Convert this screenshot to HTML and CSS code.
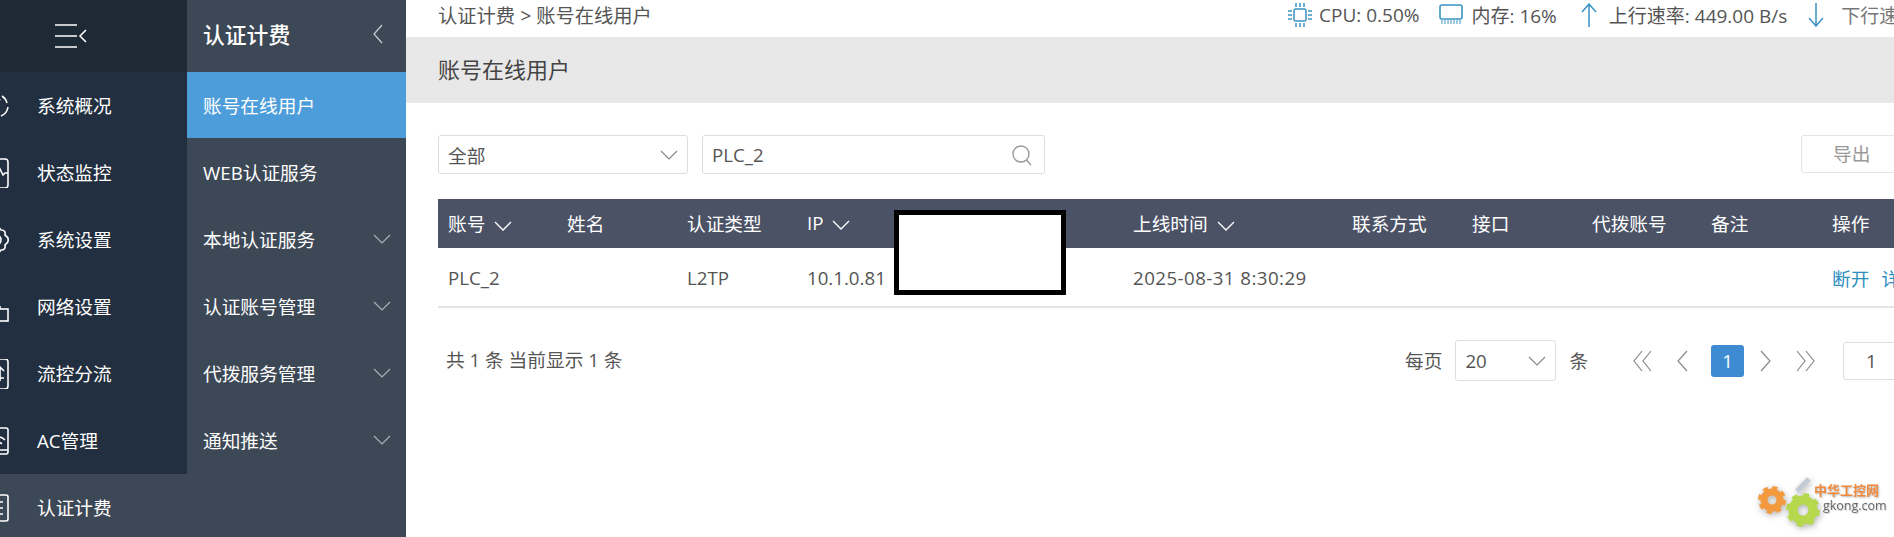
FILE: index.html
```html
<!DOCTYPE html>
<html>
<head>
    <meta charset="utf-8">
    <title>账号在线用户</title>
    <link rel="stylesheet" href="styles.css">
</head>
<body>
    <div class="app">
        <div class="nav-main">
            <div class="nav-toggle">
                <svg width="32" height="28" viewBox="0 0 32 28" fill="none" stroke="#fff" stroke-width="1.5">
                    <path d="M0 3H22M0 14H22M0 25H22"/>
                    <path d="M31 8L25 14L31 20"/>
                </svg>
            </div>
            <ul class="nav-list">
                <li class="nav-item">
                    <svg class="nav-icon" viewBox="0 0 30 30" fill="none" stroke="#fff" stroke-width="1.6"><path d="M23 5A11.5 11.5 0 0 1 28 12M29 16A11.5 11.5 0 0 1 22 25M14 4A11.5 11.5 0 0 1 19 4"/><path d="M17 15L21 8"/></svg>
                    系统概况
                </li>
                <li class="nav-item">
                    <svg class="nav-icon" viewBox="0 0 30 30" fill="none" stroke="#fff" stroke-width="1.6"><rect x="5" y="1" width="24" height="29" rx="3"/><path d="M6 17H16L20 9L24 17L26 15H29"/></svg>
                    状态监控
                </li>
                <li class="nav-item">
                    <svg class="nav-icon" viewBox="0 0 30 30" fill="none" stroke="#fff" stroke-width="1.6"><path d="M14 3Q20 1 22 5Q27 5 26 10Q30 13 29 15Q30 17 26 20Q27 25 22 25Q20 29 14 27"/><circle cx="16" cy="15" r="6"/></svg>
                    系统设置
                </li>
                <li class="nav-item">
                    <svg class="nav-icon" viewBox="0 0 30 30" fill="none" stroke="#fff" stroke-width="1.6"><rect x="15" y="17" width="14" height="12"/><path d="M21 14V17"/></svg>
                    网络设置
                </li>
                <li class="nav-item">
                    <svg class="nav-icon" viewBox="0 0 30 30" fill="none" stroke="#fff" stroke-width="1.6"><rect x="5" y="0" width="24" height="30" rx="3"/><path d="M21 8V22M16 12L21 8L25 12M14 19H25"/></svg>
                    流控分流
                </li>
                <li class="nav-item">
                    <svg class="nav-icon" viewBox="0 0 30 30" fill="none" stroke="#fff" stroke-width="1.6"><rect x="4" y="2" width="25" height="26" rx="2"/><path d="M4 24H29M14 14Q20 8 26 14M18 18Q20 15 23 18"/></svg>
                    AC管理
                </li>
                <li class="nav-item">
                    <svg class="nav-icon" viewBox="0 0 30 30" fill="none" stroke="#fff" stroke-width="1.6"><rect x="4" y="2" width="25" height="26" rx="2"/><path d="M10 9H24M10 15H24M10 21H24"/></svg>
                    认证计费
                </li>
            </ul>
        </div>

        <div class="nav-sub">
            <div class="nav-sub-title">
                认证计费
                <svg width="12" height="22" viewBox="0 0 12 22" fill="none" stroke="#c9ced4" stroke-width="1.2"><path d="M10 2L2 11L10 20"/></svg>
            </div>
            <div class="sub-item active">账号在线用户</div>
            <div class="sub-item">WEB认证服务</div>
            <div class="sub-item">本地认证服务 <svg class="chev" viewBox="0 0 18 10"><path d="M1 1L9 9L17 1"/></svg></div>
            <div class="sub-item">认证账号管理 <svg class="chev" viewBox="0 0 18 10"><path d="M1 1L9 9L17 1"/></svg></div>
            <div class="sub-item">代拨服务管理 <svg class="chev" viewBox="0 0 18 10"><path d="M1 1L9 9L17 1"/></svg></div>
            <div class="sub-item">通知推送 <svg class="chev" viewBox="0 0 18 10"><path d="M1 1L9 9L17 1"/></svg></div>
        </div>

        <div class="main">
            <div class="topbar">
                <div class="crumb">认证计费 &gt; 账号在线用户</div>
                <div class="stats">
                    <span class="stat stat-cpu">
                        <svg width="26" height="28" viewBox="0 0 26 28" fill="none" stroke="#3b93c3" stroke-width="1.5"><rect x="7" y="8" width="12" height="12" rx="2"/><path d="M9 2V6M13 2V6M17 2V6M9 22V26M13 22V26M17 22V26M1 10H5M1 14H5M1 18H5M21 10H25M21 14H25M21 18H25"/></svg>
                        CPU: 0.50%
                    </span>
                    <span class="stat stat-mem">
                        <svg width="24" height="22" viewBox="0 0 24 22" fill="none" stroke="#3b93c3" stroke-width="1.6"><rect x="1" y="1" width="22" height="14" rx="2"/><path d="M3 16V20M6 16V20M9 16V20M12 16V20M15 16V20M18 16V20M21 16V20" stroke-width="1"/></svg>
                        内存: 16%
                    </span>
                    <span class="stat stat-up">
                        <svg width="16" height="24" viewBox="0 0 16 24" fill="none" stroke="#3b93c3" stroke-width="1.5"><path d="M8 24V1M1 9L8 1L15 9"/></svg>
                        上行速率: 449.00 B/s
                    </span>
                    <span class="stat stat-down">
                        <svg width="16" height="24" viewBox="0 0 16 24" fill="none" stroke="#3b93c3" stroke-width="1.5"><path d="M8 0V23M1 15L8 23L15 15"/></svg>
                        下行速率
                    </span>
                </div>
            </div>

            <h1 class="page-title">账号在线用户</h1>

            <div class="toolbar">
                <div class="field field-select">
                    全部
                    <svg class="field-chev" viewBox="0 0 18 10"><path d="M1 1L9 9L17 1"/></svg>
                </div>
                <div class="field field-search">
                    PLC_2
                    <svg width="22" height="22" viewBox="0 0 22 22" fill="none" stroke="#9a9a9a" stroke-width="1.4"><circle cx="10" cy="10" r="8"/><path d="M15.5 16L20 21"/></svg>
                </div>
                <div class="btn-export">导出</div>
            </div>

            <div class="table">
                <div class="table-row table-head">
                    <div class="col-a">账号 <svg class="sort" viewBox="0 0 18 10"><path d="M1 1L9 9L17 1"/></svg></div>
                    <div class="col-b">姓名</div>
                    <div class="col-b">认证类型</div>
                    <div class="col-ip">IP <svg class="sort" viewBox="0 0 18 10"><path d="M1 1L9 9L17 1"/></svg></div>
                    <div class="col-time">上线时间 <svg class="sort" viewBox="0 0 18 10"><path d="M1 1L9 9L17 1"/></svg></div>
                    <div>联系方式</div>
                    <div>接口</div>
                    <div>代拨账号</div>
                    <div>备注</div>
                    <div>操作</div>
                </div>
                <div class="table-row table-body">
                    <div class="col-a">PLC_2</div>
                    <div class="col-b"></div>
                    <div class="col-b">L2TP</div>
                    <div class="col-ip">10.1.0.81</div>
                    <div class="col-time cell-time">2025-08-31 8:30:29</div>
                    <div></div>
                    <div></div>
                    <div></div>
                    <div></div>
                    <div class="actions"><a>断开</a><a>详情</a></div>
                </div>
                <div class="redact"></div>
            </div>

            <div class="pager">
                <div class="pager-total">共 1 条 当前显示 1 条</div>
                <div class="pager-right">
                    <span class="pager-label">每页</span>
                    <div class="field field-size">20 <svg class="field-chev" viewBox="0 0 18 10"><path d="M1 1L9 9L17 1"/></svg></div>
                    <span class="pager-label">条</span>
                    <div class="pager-arrows">
                        <svg width="20" height="22" viewBox="0 0 20 22"><path d="M9 1L1 11L9 21M18 1L10 11L18 21"/></svg>
                        <svg width="12" height="22" viewBox="0 0 12 22"><path d="M11 1L2 11L11 21"/></svg>
                        <span class="page-current">1</span>
                        <svg class="page-next" width="12" height="22" viewBox="0 0 12 22"><path d="M1 1L10 11L1 21"/></svg>
                        <svg width="20" height="22" viewBox="0 0 20 22"><path d="M2 1L10 11L2 21M11 1L19 11L11 21"/></svg>
                    </div>
                    <div class="field field-page">1</div>
                </div>
            </div>

            <div class="watermark">
                <svg class="gears" width="70" height="58" viewBox="0 0 70 58" fill="none">
                    <path d="M42 16L54 4" stroke="#c3ccd6" stroke-width="5"/>
                    <circle cx="17" cy="25" r="8" stroke="#f39a3e" stroke-width="7"/>
                    <circle cx="17" cy="25" r="12" stroke="#f39a3e" stroke-width="4" stroke-dasharray="5 4.42"/>
                    <circle cx="48" cy="35" r="10" stroke="#b5d84c" stroke-width="9"/>
                    <circle cx="48" cy="35" r="15" stroke="#b5d84c" stroke-width="4" stroke-dasharray="5.8 5.98"/>
                </svg>
                <div class="watermark-text">
                    <div class="wm-cn">中华工控网</div>
                    <div class="wm-en">gkong.com</div>
                </div>
            </div>
        </div>
    </div>
</body>
</html>
```

FILE: styles.css
```css
html, body {
  margin: 0;
  padding: 0;
  height: 100%;
  overflow: hidden;
  background-color: #fff;
}

body {
  font-family: "Open Sans", "Noto Sans CJK SC", sans-serif;
  font-size: 18.7px;
  color: #555;
}

ul {
  list-style: none;
  margin: 0;
  padding: 0;
}

.app {
  display: flex;
  height: 537px;
  width: 1894px;
}

/* first menu, its left edge is cut off by the window */
.nav-main {
  width: 187px;
  flex: none;
  background-color: #3d4856;
  color: #fff;
}

.nav-toggle {
  height: 72px;
  background-color: #1e2936;
  display: flex;
  align-items: center;
  padding-left: 55px;
  box-sizing: border-box;
}

.nav-item {
  height: 67px;
  box-sizing: border-box;
  padding-bottom: 2px;
  display: flex;
  align-items: center;
  background-color: #222f40;
}

.nav-item:last-child {
  background-color: #3d4856;
}

.nav-icon {
  width: 30px;
  height: 30px;
  flex: none;
  margin-left: -21px;
  margin-right: 28px;
  margin-top: 2px;
}

/* second menu */
.nav-sub {
  width: 219px;
  flex: none;
  background-color: #3d4856;
  color: #fff;
}

.nav-sub-title {
  height: 72px;
  box-sizing: border-box;
  display: flex;
  align-items: center;
  justify-content: space-between;
  padding: 0 22px 5px 16px;
  font-size: 21.8px;
  font-weight: 500;
}

.sub-item {
  height: 67px;
  box-sizing: border-box;
  display: flex;
  align-items: center;
  justify-content: space-between;
  padding: 0 15px 2px 16px;
}

.sub-item.active {
  height: 66px;
  margin-bottom: 1px;
  background-color: #4e9ddb;
}

.chev {
  width: 18px;
  height: 10px;
  fill: none;
  stroke: #aab1b9;
  stroke-width: 1.2;
}

/* content */
.main {
  flex: 1;
  min-width: 0;
  position: relative;
  overflow: hidden;
}

.topbar {
  height: 37px;
  box-sizing: border-box;
  display: flex;
  align-items: center;
  justify-content: space-between;
  padding: 0 0 7px 32px;
  font-size: 19px;
  white-space: nowrap;
}

.crumb {
  font-size: 19.3px;
}

.stats {
  width: 607px;
  flex: none;
  display: flex;
  align-items: center;
}

.stat {
  display: flex;
  align-items: center;
  flex: none;
  gap: 6px;
}

.stat svg {
  flex: none;
}

.stat-mem {
  margin-left: 20px;
  gap: 8px;
}

.stat-up {
  margin-left: 24px;
  gap: 12px;
}

.stat-down {
  margin-left: 21px;
  gap: 17px;
  color: #777;
}

.page-title {
  margin: 0;
  height: 66px;
  line-height: 64px;
  padding-left: 32px;
  background-color: #e8e8e8;
  font-size: 22px;
  font-weight: 400;
  color: #444;
}

.toolbar {
  display: flex;
  margin: 32px 0 0 32px;
  gap: 14px;
}

.field {
  height: 39px;
  flex: none;
  box-sizing: border-box;
  border: 1px solid #ddd;
  border-radius: 3px;
  display: flex;
  align-items: center;
  justify-content: space-between;
  padding: 0 9px;
  background-color: #fff;
}

.field-select {
  width: 250px;
}

.field-search {
  width: 343px;
  padding-right: 11px;
}

.field-chev {
  width: 18px;
  height: 10px;
  fill: none;
  stroke: #888;
  stroke-width: 1.2;
}

.btn-export {
  width: 150px;
  height: 38px;
  flex: none;
  box-sizing: border-box;
  margin-left: 742px;
  border: 1px solid #e4e4e4;
  border-radius: 3px;
  padding-left: 31px;
  line-height: 36px;
  color: #999;
}

.table {
  position: relative;
  margin: 25px 0 0 32px;
  width: 1520px;
}

.table-row {
  display: grid;
  grid-template-columns: 119px 120px 120px 326px 219px 120px 120px 119px 121px 120px;
  align-items: center;
}

.table-row > div {
  padding-left: 10px;
  white-space: nowrap;
}

.table-head {
  height: 49px;
  box-sizing: border-box;
  padding-bottom: 3px;
  background-color: #4b5266;
  color: #fff;
}

.table-body {
  height: 58px;
  border-bottom: 2px solid #e4e4e4;
}

.cell-time {
  letter-spacing: 0.45px;
}

.sort {
  width: 18px;
  height: 10px;
  margin-left: 4px;
  fill: none;
  stroke: #fff;
  stroke-width: 1.3;
}

.actions a {
  color: #2e8ec0;
  margin-right: 12px;
}

/* covers the ip detail column */
.redact {
  position: absolute;
  left: 456px;
  top: 11px;
  width: 172px;
  height: 85px;
  box-sizing: border-box;
  background-color: #fff;
  border: 5px solid #000;
}

.pager {
  display: flex;
  align-items: center;
  justify-content: space-between;
  margin: 32px 0 0 32px;
  width: 1521px;
}

.pager-total {
  padding: 0 0 5px 8px;
}

.pager-label {
  padding-bottom: 3px;
}

.pager-right {
  display: flex;
  align-items: center;
  gap: 13px;
  width: 554px;
  flex: none;
  white-space: nowrap;
}

.field-size {
  width: 101px;
  height: 41px;
}

.pager-arrows {
  display: flex;
  align-items: center;
  flex: none;
  gap: 23px;
  margin-left: 32px;
}

.pager-arrows svg {
  flex: none;
  fill: none;
  stroke: #888;
  stroke-width: 1.2;
}

.pager-arrows .page-next {
  margin-left: -7px;
}

.page-current {
  width: 33px;
  height: 32px;
  line-height: 32px;
  text-align: center;
  color: #fff;
  background-color: #3f8bd2;
  border-radius: 3px;
}

.field-page {
  width: 100px;
  height: 38px;
  margin-left: 15px;
  padding-left: 22px;
}

.watermark {
  position: absolute;
  left: 1349px;
  top: 475px;
  display: flex;
  align-items: flex-start;
  filter: blur(0.4px);
}

.gears {
  flex: none;
  margin-right: -11px;
  filter: drop-shadow(1px 2px 3px rgba(0, 0, 0, 0.3));
}

.watermark-text {
  margin-top: 7px;
  line-height: 16px;
}

.wm-cn {
  font-size: 13px;
  font-weight: 700;
  color: #f08a3c;
  text-shadow: 1px 1px 2px rgba(0, 0, 0, 0.3);
}

.wm-en {
  padding-left: 9px;
  font-size: 12.5px;
  color: #666;
  text-shadow: 1px 1px 1px rgba(0, 0, 0, 0.2);
}
```
